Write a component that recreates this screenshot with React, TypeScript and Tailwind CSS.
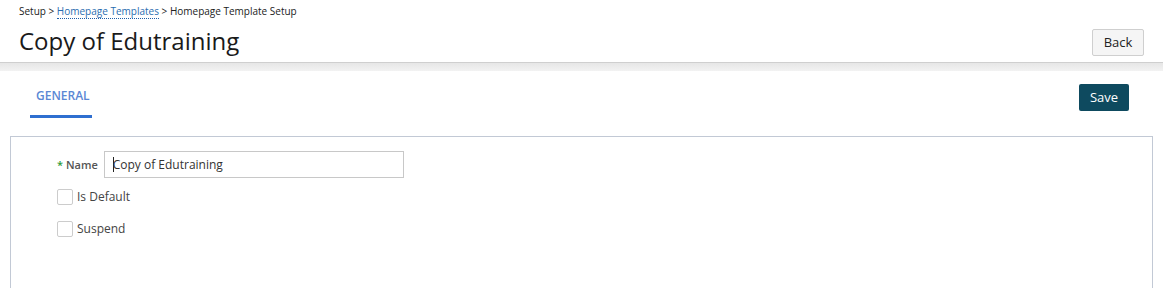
export default function App() {
  return (
    <div className="h-[288px] w-[1163px] overflow-hidden bg-white font-['Open_Sans',sans-serif] text-[#222]">
      {/* header */}
      <div className="flex h-[62px] items-start justify-between pl-[19px] pr-[19px]">
        <div>
          <div className="pt-[3px] text-[10px] leading-[16px] text-[#222]">
            Setup &gt;{' '}
            <span className="border-b border-dotted border-[#1f5fa8] text-[#2a6db0]">Homepage Templates</span>{' '}
            &gt; Homepage Template Setup
          </div>
          <h1 className="mt-[7px] text-[24px] leading-[30px] text-[#1a1a1a]">Copy of Edutraining</h1>
        </div>
        <button className="mt-[29px] h-[27px] w-[52px] rounded-[2px] border border-[#cfcfcf] bg-[#f5f5f5] text-[13px] text-[#222]">
          Back
        </button>
      </div>

      {/* divider band */}
      <div className="h-[9px] border-t border-[#cfcfcf] bg-gradient-to-b from-[#e6e6e6] to-[#f2f2f2]" />

      {/* tabs */}
      <div className="flex items-start justify-between pl-[30px] pr-[34px]">
        <div className="mt-[17px] h-[30px] w-[62px] border-b-[3px] border-[#2f6fd0] pl-[6px] text-[12px] font-semibold leading-[16px] text-[#5b87d4]">
          GENERAL
        </div>
        <button className="mt-[13px] h-[27px] w-[50px] rounded-[2px] bg-[#0e4a5f] text-[13px] text-white">
          Save
        </button>
      </div>

      {/* panel */}
      <div className="mx-[10px] mt-[18px] h-[200px] border-x border-t border-[#c2c9d5] pl-[46px] pt-[14px]">
        <div className="flex items-center">
          <span className="text-[11px] font-semibold leading-[16px] text-[#555]">
            <span className="text-[#2f9a3a]">*</span> Name
          </span>
          <div className="ml-[6px] flex h-[27px] w-[300px] items-center border border-[#c8c8c8] pl-[8px] text-[12px] text-[#333]">
            <span className="mr-[-1px] inline-block h-[15px] w-px bg-[#222]" />
            Copy of Edutraining
          </div>
        </div>
        <label className="mt-[11px] flex items-center">
          <span className="h-[16px] w-[16px] rounded-[2px] border border-[#cccccc] bg-white" />
          <span className="ml-[4px] text-[12px] leading-[16px] text-[#444]">Is Default</span>
        </label>
        <label className="mt-[16px] flex items-center">
          <span className="h-[16px] w-[16px] rounded-[2px] border border-[#cccccc] bg-white" />
          <span className="ml-[4px] text-[12px] leading-[16px] text-[#444]">Suspend</span>
        </label>
      </div>
    </div>
  )
}
